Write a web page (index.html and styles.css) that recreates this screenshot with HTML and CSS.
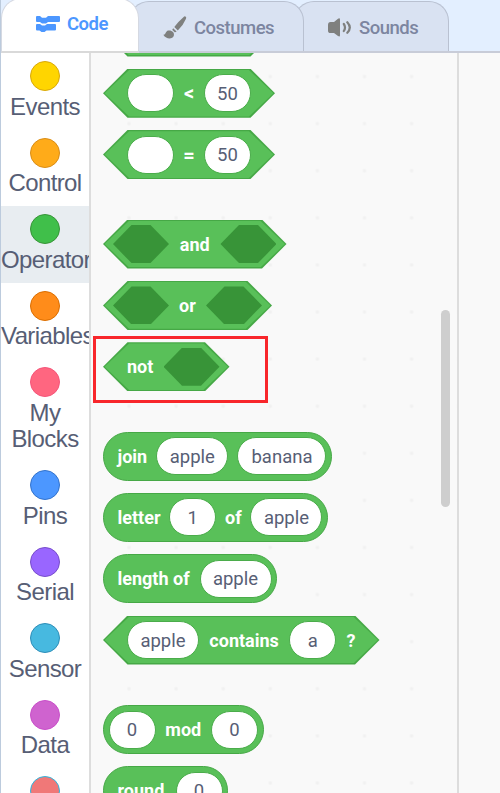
FILE: index.html
```html
<!DOCTYPE html>
<html lang="en">
<head>
<meta charset="utf-8">
<title>Code</title>
<link rel="stylesheet" href="styles.css">
</head>
<body>
<div class="app">
  <nav class="tabs">
    <div class="tab active">
      <svg width="25" height="18" viewBox="0 0 25 18"><path fill="#4c97ff" d="M1 1h3l2 1.7h4L12 1h11q1 0 1 1v4q0 1-1 1H12l-2 1.500H6L4 7H1Q0 7 0 6V2q0-1 1-1zM1 9h3l2 1.600h3L11 9h8q1 0 1 1v4.500q0 1-1 1h-8.500l-2 1.500h-3l-2-1.500H1q-1 0-1-1V10q0-1 1-1z"/></svg>
      <span>Code</span>
    </div>
    <div class="tab costumes">
      <svg width="24" height="24" viewBox="0 0 24 24"><path fill="#7f807f" d="M22.500.6q1.200.8.500 2.200-2.800 6.700-8.200 11.600l-3.500-3.300Q15.600 5.200 20.900.7q.8-.6 1.600-.1zM10.200 12.300l3.400 3.100q-1 1-1.900.800l-2.300-2.200q-.2-.8.800-1.700zM5.200 14.600c3.600-.6 6.600 2.100 5.600 5.100-1.200 3.600-7.400 4-10.500-.9 2.600.4 2.100-3.600 4.900-4.200z"/></svg>
      <span>Costumes</span>
    </div>
    <div class="tab sounds">
      <svg width="24" height="19" viewBox="0 0 24 19"><path fill="#7f807f" d="M10 .8q2-1.300 2 1v15.400q0 2.200-2 .9l-4-3H2.500Q0 15.100 0 12.500V7q0-3 2.500-3H6z"/><path fill="none" stroke="#7f807f" stroke-width="2.200" stroke-linecap="round" d="M15.800 6q2.400 3.400 0 7M19.300 4.200q5 5.400 0 10.600"/></svg>
      <span>Sounds</span>
    </div>
  </nav>
  <main class="editor">
    <aside class="categories">
      <div class="category"><i class="dot events"></i><span>Events</span></div>
      <div class="category"><i class="dot control"></i><span>Control</span></div>
      <div class="category overflowing selected"><i class="dot operators"></i><span>Operators</span></div>
      <div class="category overflowing"><i class="dot variables"></i><span>Variables</span></div>
      <div class="category"><i class="dot myblocks"></i><span>My<br>Blocks</span></div>
      <div class="category"><i class="dot pins"></i><span>Pins</span></div>
      <div class="category"><i class="dot serial"></i><span>Serial</span></div>
      <div class="category"><i class="dot sensor"></i><span>Sensor</span></div>
      <div class="category"><i class="dot data"></i><span>Data</span></div>
      <div class="category"><i class="dot extra"></i></div>
    </aside>
    <section class="flyout">
      <div class="group">
        <div class="block hex w-compare"></div>
        <div class="block hex w-compare"><b class="field"></b><span class="symbol">&lt;</span><b class="field">50</b></div>
        <div class="block hex w-compare"><b class="field"></b><span class="symbol">=</span><b class="field">50</b></div>
      </div>
      <div class="group">
        <div class="block hex bool w-and"><b class="slot"></b><span>and</span><b class="slot"></b></div>
        <div class="block hex bool w-or"><b class="slot"></b><span>or</span><b class="slot"></b></div>
        <div class="block hex bool w-not"><span>not</span><b class="slot"></b></div>
      </div>
      <div class="group">
        <div class="block round w-join"><span>join</span><b class="field word">apple</b><b class="field long">banana</b></div>
        <div class="block round w-letter"><span>letter</span><b class="field">1</b><span>of</span><b class="field word">apple</b></div>
        <div class="block round w-length"><span>length of</span><b class="field word">apple</b></div>
        <div class="block hex w-contains"><b class="field word">apple</b><span>contains</span><b class="field">a</b><span>?</span></div>
      </div>
      <div class="group">
        <div class="block round w-mod"><b class="field">0</b><span>mod</span><b class="field">0</b></div>
        <div class="block round w-round"><span>round</span><b class="field">0</b></div>
      </div>
      <div class="highlight"></div>
      <div class="scrollbar"></div>
    </section>
    <section class="workspace"></section>
  </main>
</div>
</body>
</html>
```
FILE: styles.css
```css
* { box-sizing: border-box; }
body { margin: 0; overflow: hidden; background: #e3efff; }
.app { width: 500px; height: 793px; display: flex; flex-direction: column; overflow: hidden; border-left: 1px solid #bccbdd; }

.tabs { height: 53px; flex: none; display: flex; align-items: flex-end; border-bottom: 2px solid #c8ccd8; }
.tab {
  height: 50px; position: relative; display: flex; align-items: center;
  border: 1.500px solid #b9c1d1; border-bottom: 0; border-radius: 20px 20px 0 0;
  background: #d9e2f2; color: #7c85a0;
  font: 500 18.500px Roboto, sans-serif; letter-spacing: -0.500px;
}
.tab svg { flex: none; }
.tab.active {
  width: 138px; height: 55px; margin-bottom: -2px; padding: 0 0 2px 34px; gap: 6px; z-index: 1;
  border-color: #d5d9e2; border-bottom: 2px solid #d9d9d9;
  background: #fff; color: #4c97ff; font-weight: 600; font-size: 18.500px;
}
.tab.costumes { width: 175px; margin-left: -10px; padding: 2px 0 0 33px; gap: 7px; }
.tab.sounds { width: 155px; margin-left: -10px; padding: 2px 0 0 33px; gap: 7px; z-index: -1; }

.editor { flex: 1; min-height: 0; display: flex; background: #f9f9f9; }
.categories { width: 90px; flex: none; overflow: hidden; background: #fff; border-right: 2px solid #ddd; }
.category {
  min-height: 76.500px; padding: 8px 0 9.500px; display: flex; flex-direction: column; align-items: center;
  color: #575e75; font: 24px/26.500px "Liberation Sans", sans-serif; letter-spacing: -0.600px; text-align: center;
}
.category.selected { background: #e8edf1; }
.category.overflowing { align-items: flex-start; }
.overflowing .dot { margin-left: 29px; }
.dot { width: 30px; height: 30px; flex: none; margin-bottom: 2.500px; border: 1.500px solid; border-radius: 50%; }
.events { background: #ffd500; border-color: #d9a80a; }
.control { background: #ffab19; border-color: #d98d17; }
.operators { background: #40bf4a; border-color: #389438; }
.variables { background: #ff8c1a; border-color: #db6e00; }
.myblocks { background: #ff6680; border-color: #f5557a; }
.pins { background: #4c97ff; border-color: #3373cc; }
.serial { background: #9966ff; border-color: #774dcb; }
.sensor { background: #47b9e0; border-color: #2e8eb8; }
.data { background: #cf63cf; border-color: #c94fc9; }
.extra { background: #f07878; border-color: #2eb8e0; }

.flyout {
  width: 368px; flex: none; position: relative; overflow: hidden; padding-left: 12px;
  border-right: 2px solid #ddd;
  background: radial-gradient(circle, #f1f1f1 1px, #f9f9f9 2.500px) 14.500px 0 / 47.100px 47.100px;
}
.group { display: flex; flex-direction: column; gap: 12.300px; margin-bottom: 40.500px; }
.group:first-child { margin-top: -45.500px; }
.block {
  height: 49px; flex: none; position: relative; z-index: 0; display: flex; align-items: center;
  justify-content: space-between; background: #46a846; color: #fff; font: 700 18px Roboto, sans-serif;
}
.hex, .hex::before { clip-path: polygon(24.500px 0, calc(100% - 24.500px) 0, 100% 50%, calc(100% - 24.500px) 100%, 24.500px 100%, 0 50%); }
.hex { padding: 0 24px; }
.hex::before { content: ""; position: absolute; inset: 1.200px 1.600px; z-index: -1; background: #59c059; }
.bool { padding: 0 10px; }
.round { border: 1.200px solid #46a846; border-radius: 25px; background: #59c059; padding: 0 4.500px 0 13.500px; }
.block span { white-space: nowrap; }
.symbol { font-size: 20px; }
.field {
  width: 47px; height: 38px; padding-top: 1px; display: flex; align-items: center; justify-content: center;
  border: 1.200px solid #4bac4b; border-radius: 19px; background: #fff; color: #575e75; font-weight: 400; font-size: 18.500px;
}
.word { width: 72px; }
.long { width: 89px; }
.slot { width: 56px; height: 38px; background: #389438; clip-path: polygon(18.500px 0, 37.500px 0, 100% 50%, 37.500px 100%, 18.500px 100%, 0 50%); }
.w-compare { width: 172px; }
.w-and { width: 183.500px; }
.w-or { width: 169px; }
.w-not { width: 126.500px; padding-left: 24px; }
.w-join { width: 229px; }
.w-letter { width: 225px; }
.w-length { width: 174px; }
.w-contains { width: 276.500px; }
.w-mod { width: 160.500px; padding-left: 4.500px; }
.w-round { width: 125px; }
.highlight { position: absolute; left: 2px; top: 282.500px; width: 175px; height: 67px; border: 3px solid #f8262b; }
.scrollbar { position: absolute; left: 350px; top: 256.500px; width: 9px; height: 197.500px; border-radius: 5px; background: #cecece; }
.workspace { flex: 1; background: #f9f9f9; }
```
